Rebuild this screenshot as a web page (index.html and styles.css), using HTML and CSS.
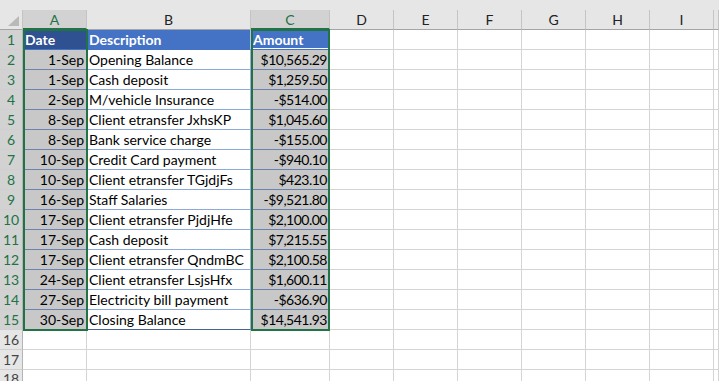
FILE: index.html
```html
<!DOCTYPE html>
<html lang="en">
<head>
    <meta charset="UTF-8">
    <title>Bank statement - Sheet1</title>
    <link rel="stylesheet" href="styles.css">
</head>
<body>
    <div class="topbar"></div>
    <div class="sheet">
        <!-- Column headers -->
        <div class="row colhead">
            <div class="corner"><svg width="12" height="11" viewBox="0 0 12 11"><polygon points="11,0 11,10 0,10" fill="#b9b9b9"/></svg></div>
            <div class="sel">A</div><div>B</div><div class="sel">C</div>
            <div>D</div><div>E</div><div>F</div><div>G</div><div>H</div><div>I</div><div></div>
        </div>

        <div class="row">
            <div class="num sel">1</div>
            <div class="th dark">Date</div><div class="th">Description</div><div class="th active">Amount</div>
            <div></div><div></div><div></div><div></div><div></div><div></div><div></div>
        </div>
        <div class="row">
            <div class="num sel">2</div>
            <div class="cell pick r">1-Sep</div><div class="cell">Opening Balance</div><div class="cell pick r amt">$10,565.29</div>
            <div></div><div></div><div></div><div></div><div></div><div></div><div></div>
        </div>
        <div class="row">
            <div class="num sel">3</div>
            <div class="cell pick r">1-Sep</div><div class="cell">Cash deposit</div><div class="cell pick r amt">$1,259.50</div>
            <div></div><div></div><div></div><div></div><div></div><div></div><div></div>
        </div>
        <div class="row">
            <div class="num sel">4</div>
            <div class="cell pick r">2-Sep</div><div class="cell">M/vehicle Insurance</div><div class="cell pick r amt">-$514.00</div>
            <div></div><div></div><div></div><div></div><div></div><div></div><div></div>
        </div>
        <div class="row">
            <div class="num sel">5</div>
            <div class="cell pick r">8-Sep</div><div class="cell">Client etransfer JxhsKP</div><div class="cell pick r amt">$1,045.60</div>
            <div></div><div></div><div></div><div></div><div></div><div></div><div></div>
        </div>
        <div class="row">
            <div class="num sel">6</div>
            <div class="cell pick r">8-Sep</div><div class="cell">Bank service charge</div><div class="cell pick r amt">-$155.00</div>
            <div></div><div></div><div></div><div></div><div></div><div></div><div></div>
        </div>
        <div class="row">
            <div class="num sel">7</div>
            <div class="cell pick r">10-Sep</div><div class="cell">Credit Card payment</div><div class="cell pick r amt">-$940.10</div>
            <div></div><div></div><div></div><div></div><div></div><div></div><div></div>
        </div>
        <div class="row">
            <div class="num sel">8</div>
            <div class="cell pick r">10-Sep</div><div class="cell">Client etransfer TGjdjFs</div><div class="cell pick r amt">$423.10</div>
            <div></div><div></div><div></div><div></div><div></div><div></div><div></div>
        </div>
        <div class="row">
            <div class="num sel">9</div>
            <div class="cell pick r">16-Sep</div><div class="cell">Staff Salaries</div><div class="cell pick r amt">-$9,521.80</div>
            <div></div><div></div><div></div><div></div><div></div><div></div><div></div>
        </div>
        <div class="row">
            <div class="num sel">10</div>
            <div class="cell pick r">17-Sep</div><div class="cell">Client etransfer PjdjHfe</div><div class="cell pick r amt">$2,100.00</div>
            <div></div><div></div><div></div><div></div><div></div><div></div><div></div>
        </div>
        <div class="row">
            <div class="num sel">11</div>
            <div class="cell pick r">17-Sep</div><div class="cell">Cash deposit</div><div class="cell pick r amt">$7,215.55</div>
            <div></div><div></div><div></div><div></div><div></div><div></div><div></div>
        </div>
        <div class="row">
            <div class="num sel">12</div>
            <div class="cell pick r">17-Sep</div><div class="cell">Client etransfer QndmBC</div><div class="cell pick r amt">$2,100.58</div>
            <div></div><div></div><div></div><div></div><div></div><div></div><div></div>
        </div>
        <div class="row">
            <div class="num sel">13</div>
            <div class="cell pick r">24-Sep</div><div class="cell">Client etransfer LsjsHfx</div><div class="cell pick r amt">$1,600.11</div>
            <div></div><div></div><div></div><div></div><div></div><div></div><div></div>
        </div>
        <div class="row">
            <div class="num sel">14</div>
            <div class="cell pick r">27-Sep</div><div class="cell">Electricity bill payment</div><div class="cell pick r amt">-$636.90</div>
            <div></div><div></div><div></div><div></div><div></div><div></div><div></div>
        </div>
        <div class="row">
            <div class="num sel">15</div>
            <div class="cell pick r last">30-Sep</div><div class="cell last">Closing Balance</div><div class="cell pick r amt last">$14,541.93</div>
            <div></div><div></div><div></div><div></div><div></div><div></div><div></div>
        </div>
        <div class="row">
            <div class="num">16</div>
            <div></div><div></div><div></div><div></div><div></div><div></div><div></div><div></div><div></div><div></div>
        </div>
        <div class="row">
            <div class="num">17</div>
            <div></div><div></div><div></div><div></div><div></div><div></div><div></div><div></div><div></div><div></div>
        </div>
        <div class="row short">
            <div class="num">18</div>
            <div></div><div></div><div></div><div></div><div></div><div></div><div></div><div></div><div></div><div></div>
        </div>

        <!-- selection frames -->
        <div class="frame frame-a"></div>
        <div class="frame frame-c"></div>
    </div>
</body>
</html>
```

FILE: styles.css
```css
/* Page */
body {
    margin: 0;
    background: #fff;
    font-family: 'Lato', 'Liberation Sans', sans-serif;
    color: #000;
    overflow: hidden;
}

.topbar {
    height: 10px;
    background: #e6e6e6;
}

.sheet {
    position: relative;
}

/* Grid rows */
.row {
    display: grid;
    grid-template-columns: 23px 64px 164px 79px repeat(6, 64px) 1fr;
    height: 20px;
}

.row > div {
    box-sizing: border-box;
    height: 20px;
    border-right: 1px solid #d4d4d4;
    border-bottom: 1px solid #d4d4d4;
    font-size: 14px;
    line-height: 19px;
    padding: 0 2px;
    white-space: nowrap;
    overflow: hidden;
}

/* Last row is cut by the window edge */
.row.short > .num {
    line-height: 17px;
}

/* Column headers */
.colhead > div {
    background: #e6e6e6;
    color: #222;
    text-align: center;
    border-right-color: #c4c4c4;
    border-bottom-color: #a5a5a5;
}

.colhead > div.sel {
    background: #d2d2d2;
    color: #217346;
    border-bottom: 2px solid #217346;
}

.colhead .corner {
    display: flex;
    align-items: flex-end;
    justify-content: flex-end;
    padding: 0 2px 2px 0;
}

/* Row numbers */
.row > .num {
    background: #e6e6e6;
    color: #444;
    text-align: center;
    padding: 0;
    border-right-color: #b4b4b4;
    border-bottom-color: #cfcfcf;
}

.row > .num.sel {
    background: #d2d2d2;
    color: #217346;
}

/* Table cells */
.row > .th {
    background: #4472c4;
    color: #fff;
    font-weight: bold;
    border-right-color: #b0c0de;
    border-bottom-color: #4472c4;
}

.row > .th.dark {
    background: #2f5091;
}

.row > .th.active {
    box-shadow: inset 0 0 0 1px #fff;
}

.row > .cell {
    border-right-color: #9eb0d2;
    border-bottom-color: #8ea9db;
}

.row > .cell.pick {
    background: #c8c8c8;
    border-bottom-color: #6d83ab;
}

.row > .cell.last {
    border-bottom-color: #4a6392;
}

.r {
    text-align: right;
}

.amt {
    letter-spacing: -0.5px;
    padding-right: 3px;
}

/* Selection frames */
.frame {
    position: absolute;
    top: 19px;
    height: 302px;
    box-sizing: border-box;
    border: 2px solid #217346;
    pointer-events: none;
}

.frame-a {
    left: 23px;
    width: 65px;
}

.frame-c {
    left: 251px;
    width: 79px;
}
```
